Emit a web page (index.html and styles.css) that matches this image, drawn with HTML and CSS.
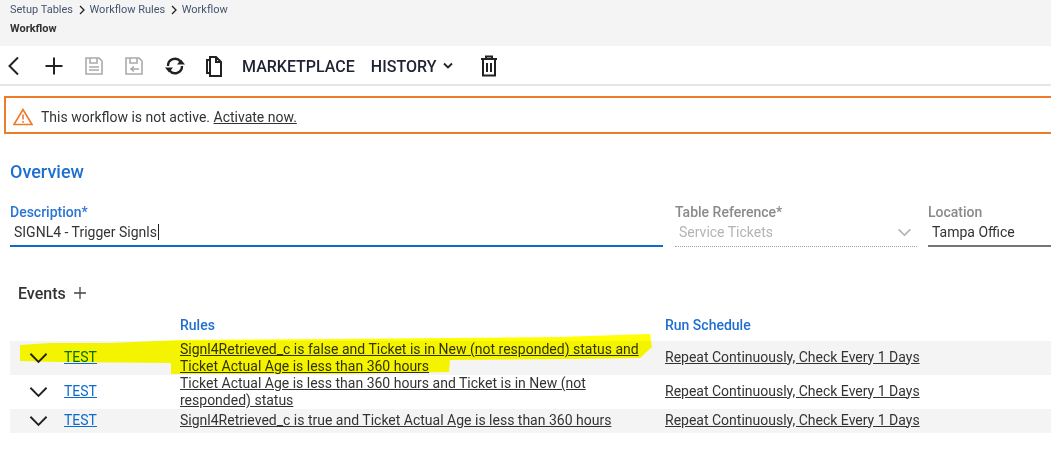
FILE: index.html
```html
<!DOCTYPE html>
<html lang="en">
<head>
<meta charset="utf-8">
<title>Workflow</title>
<link rel="stylesheet" href="styles.css">
</head>
<body>
<header class="page-head">
  <nav class="crumbs">
    <a>Setup Tables</a>
    <svg class="crumb-sep" viewBox="0 0 8 10"><path d="M2 1l4 4-4 4"/></svg>
    <a>Workflow Rules</a>
    <svg class="crumb-sep" viewBox="0 0 8 10"><path d="M2 1l4 4-4 4"/></svg>
    <a>Workflow</a>
  </nav>
  <div class="page-title">Workflow</div>
</header>
<div class="toolbar">
  <svg class="ic ic-back" viewBox="0 0 14 20"><path d="M12 1.500L3.500 10l8.500 8.500"/></svg>
  <svg class="ic ic-add" viewBox="0 0 20 20"><path d="M10 1.500v17M1.500 10h17"/></svg>
  <svg class="ic ic-save" viewBox="0 0 20 20"><path d="M2 2h13l3 3v13H2zM6 2v5h7V2M5 11h10M5 14h10" /></svg>
  <svg class="ic ic-saveas" viewBox="0 0 20 20"><path d="M2 2h13l3 3v13H2zM6 2v5h7V2M15 13H7M10 10.500l-3 2.500 3 2.500"/></svg>
  <svg class="ic ic-refresh" viewBox="0 0 22 20"><path d="M4 10a7 7 0 0 1 12.500-4.500M18 10a7 7 0 0 1-12.500 4.500"/><path class="solid" d="M13 8.500h8l-4-5zM1 11.500h8l-4 5z"/></svg>
  <svg class="ic ic-copy" viewBox="0 0 18 22"><path d="M5 4V2h6l5 5v14H5zM5 5H2v13h3M11 2v5h5"/></svg>
  <span class="tool-text tool-market">MARKETPLACE</span>
  <span class="tool-text">HISTORY</span>
  <svg class="ic-caret" viewBox="0 0 12 8"><path d="M2 1.500l4 4 4-4"/></svg>
  <svg class="ic ic-trash" viewBox="0 0 18 22"><path d="M1 4h16M6 4V1.500h6V4M3 4v16.500h12V4M7 8v9M11 8v9"/></svg>
</div>
<div class="alert">
  <svg class="alert-icon" viewBox="0 0 20 18"><path d="M10 1.500L1 16.500h18zM10 6.500v5M10 13v1.800"/></svg>
  <span>This workflow is not active. <a class="plain-link">Activate now.</a></span>
</div>
<main class="content">
  <h2 class="section-title">Overview</h2>
  <div class="fields">
    <div class="field field-desc">
      <label class="active-label">Description*</label>
      <div class="value focus">SIGNL4 - Trigger Signls<i class="caret"></i></div>
    </div>
    <div class="field field-table">
      <label>Table Reference*</label>
      <div class="value disabled">Service Tickets
        <svg class="select-arrow" viewBox="0 0 16 10"><path d="M1.500 1.500L8 8l6.500-6.500"/></svg>
      </div>
    </div>
    <div class="field field-loc">
      <label>Location</label>
      <div class="value plain">Tampa Office</div>
    </div>
  </div>
  <div class="events-head">
    <span>Events</span>
    <svg class="events-add" viewBox="0 0 12 12"><path d="M6 0v12M0 6h12"/></svg>
  </div>
  <div class="table">
    <div class="row row-head">
      <div></div><div></div>
      <div class="th">Rules</div>
      <div class="th">Run Schedule</div>
    </div>
    <div class="row row-shade">
      <svg class="chev" viewBox="0 0 20 12"><path d="M1.500 1.500L10 10l8.500-8.500"/></svg>
      <a class="test-link">TEST</a>
      <a class="plain-link">Signl4Retrieved_c is false and Ticket is in New (not responded) status and Ticket Actual Age is less than 360 hours</a>
      <a class="plain-link sched">Repeat Continuously, Check Every 1 Days</a>
    </div>
    <div class="row">
      <svg class="chev" viewBox="0 0 20 12"><path d="M1.500 1.500L10 10l8.500-8.500"/></svg>
      <a class="test-link">TEST</a>
      <a class="plain-link">Ticket Actual Age is less than 360 hours and Ticket is in New (not responded) status</a>
      <a class="plain-link sched">Repeat Continuously, Check Every 1 Days</a>
    </div>
    <div class="row row-shade">
      <svg class="chev" viewBox="0 0 20 12"><path d="M1.500 1.500L10 10l8.500-8.500"/></svg>
      <a class="test-link">TEST</a>
      <a class="plain-link single">Signl4Retrieved_c is true and Ticket Actual Age is less than 360 hours</a>
      <a class="plain-link sched">Repeat Continuously, Check Every 1 Days</a>
    </div>
  </div>
</main>
<svg class="marker" viewBox="0 0 1051 461"><polygon points="20,345 50,343 110,343 180,340 340,339 450,338 560,337 650,334 652,347 640,358 565,359 450,360 449,372 340,374 171,374 171,363 60,362 20,361"/></svg>
</body>
</html>
```
FILE: styles.css
```css
* { box-sizing: border-box; }
html, body { margin: 0; padding: 0; }
body {
  position: relative;
  width: 1051px;
  height: 461px;
  overflow: hidden;
  background: #fff;
  color: #222;
  font-family: Roboto, "Liberation Sans", sans-serif;
  font-size: 14px;
}
a { color: inherit; }
.page-head {
  height: 46px;
  background: #f4f4f4;
  padding: 3px 10px 0;
  font-size: 11px;
}
.crumbs { display: flex; align-items: center; height: 13px; color: #44546f; }
.crumb-sep { width: 8px; height: 10px; margin: 0 4px 0 4.500px; fill: none; stroke: #222; stroke-width: 1.3; }
.page-title { margin-top: 6px; font-weight: 700; line-height: 13px; color: #333; }
.toolbar {
  display: flex;
  align-items: center;
  height: 40px;
  border-bottom: 2px solid #e6e6e6;
  padding: 2px 0 0 6px;
}
.ic { fill: none; stroke: #222; stroke-width: 2; flex: none; }
.ic-back { width: 14px; height: 20px; }
.ic-add { width: 20px; height: 20px; margin-left: 24px; }
.ic-save, .ic-saveas { width: 20px; height: 20px; stroke: #aaa; stroke-width: 1.6; }
.ic-save { margin-left: 20px; }
.ic-saveas { margin-left: 20px; }
.ic-refresh { width: 22px; height: 20px; margin-left: 20px; stroke-width: 2.4; }
.ic-refresh .solid { fill: #222; stroke: none; }
.ic-copy { width: 18px; height: 22px; margin-left: 19px; }
.tool-text { font-size: 16px; font-weight: 500; color: #1f2233; }
.tool-market { margin: 0 16px 0 19px; }
.ic-caret { width: 12px; height: 8px; margin-left: 6px; fill: none; stroke: #222; stroke-width: 1.8; }
.ic-trash { width: 18px; height: 22px; margin-left: 26px; }
.alert {
  display: flex;
  align-items: center;
  width: 1060px;
  height: 38px;
  margin: 10px 0 0 4px;
  border: 2px solid #ee7b2a;
  padding: 3px 0 0 7px;
  font-size: 14px;
  color: #333;
}
.alert-icon { width: 20px; height: 18px; margin-right: 8px; fill: none; stroke: #ee7b2a; stroke-width: 1.6; }
.plain-link { text-decoration: underline; }
.content { padding: 27px 0 0 10px; }
.section-title { margin: 0; font-size: 18px; font-weight: 500; line-height: 22px; color: #1f6fd0; }
.fields { display: flex; margin-top: 21px; }
.field { flex: none; }
.field label { display: block; font-size: 14px; font-weight: 500; line-height: 16px; color: #8a8a8a; }
.field .active-label { color: #2a75d3; }
.field-desc { width: 653px; }
.field-table { width: 242px; margin: 0 11px 0 12px; }
.field-loc { width: 130px; }
.value { position: relative; display: flex; align-items: center; height: 27px; padding: 0 0 1px 4px; font-size: 14px; color: #333; border-bottom: 2px solid #757575; }
.value.focus { border-bottom-color: #0a6ccd; }
.value.disabled { justify-content: space-between; color: #b4b4b4; border-bottom: 1px dotted #a0a0a0; padding-bottom: 2px; }
.caret { width: 1px; height: 16px; margin-left: 1px; background: #222; }
.select-arrow { width: 15px; height: 9px; margin-right: 5px; fill: none; stroke: #b0b0b0; stroke-width: 1.8; }
.events-head { display: flex; align-items: center; gap: 8px; height: 20px; margin: 36px 0 0 8px; font-size: 16px; font-weight: 500; color: #333; }
.events-add { width: 12px; height: 12px; fill: none; stroke: #444; stroke-width: 1.3; }
.table { margin-top: 11px; }
.row {
  display: grid;
  grid-template-columns: 54px 116px 485px 1fr;
  align-items: center;
  width: 1041px;
  font-size: 14px;
  line-height: 17px;
  color: #333;
}
.row > :nth-child(3) { padding-right: 20px; }
.row > :last-child { white-space: nowrap; }
.row-shade { background: #f4f4f4; }
.row-head { height: 27px; padding-bottom: 5px; }
.row .th { font-size: 14px; font-weight: 500; color: #1f6fd0; padding-right: 0; }
.chev { width: 19px; height: 12px; margin-left: 19px; fill: none; stroke: #222; stroke-width: 2; }
.test-link { color: #0a6ccd; text-decoration: underline; padding-bottom: 2px; }
.sched, .single { padding-bottom: 2px; }
.row:nth-child(2) { height: 34px; }
.row:nth-child(3) { height: 34px; }
.row:nth-child(4) { height: 24px; }
.marker { position: absolute; left: 0; top: 0; width: 1051px; height: 461px; mix-blend-mode: multiply; pointer-events: none; }
.marker polygon { fill: #ffff00; }
```
